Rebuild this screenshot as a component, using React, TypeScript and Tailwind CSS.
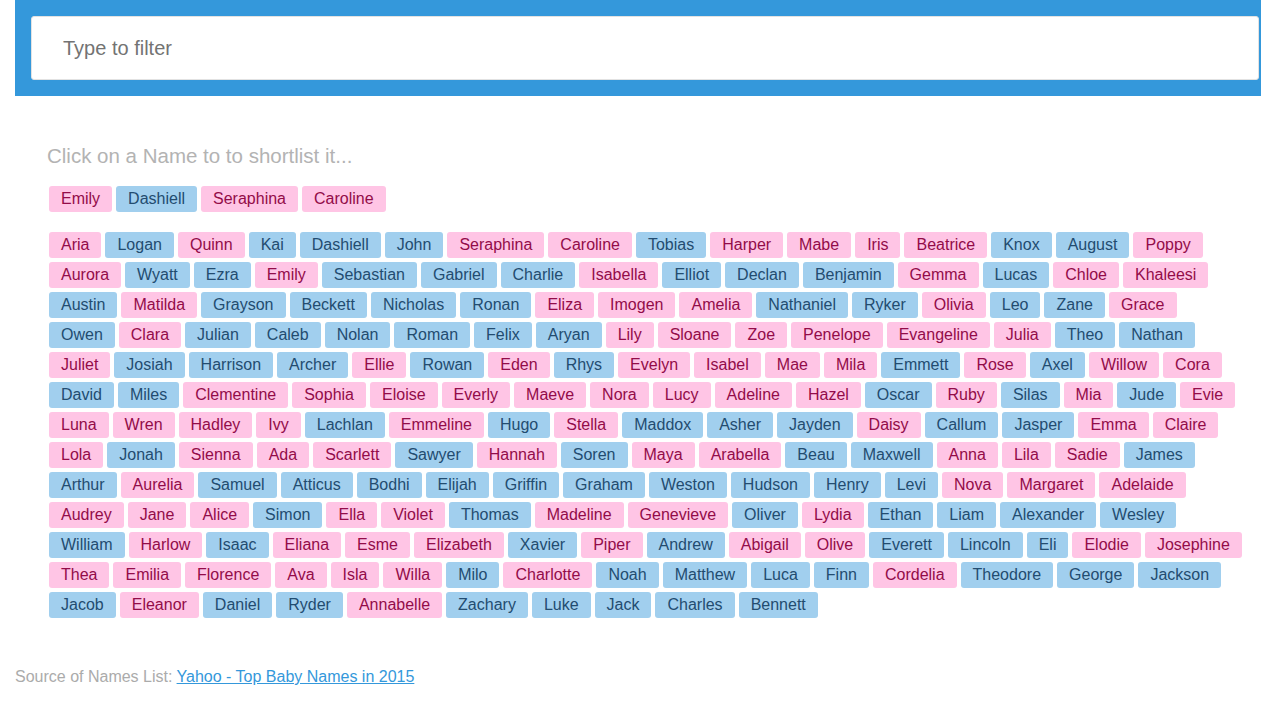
import { useState } from 'react';

// '*' marks a girl's name
const rows = [
  'Aria* Logan Quinn* Kai Dashiell John Seraphina* Caroline* Tobias Harper* Mabe* Iris* Beatrice* Knox August Poppy*',
  'Aurora* Wyatt Ezra Emily* Sebastian Gabriel Charlie Isabella* Elliot Declan Benjamin Gemma* Lucas Chloe* Khaleesi*',
  'Austin Matilda* Grayson Beckett Nicholas Ronan Eliza* Imogen* Amelia* Nathaniel Ryker Olivia* Leo Zane Grace*',
  'Owen Clara* Julian Caleb Nolan Roman Felix Aryan Lily* Sloane* Zoe* Penelope* Evangeline* Julia* Theo Nathan',
  'Juliet* Josiah Harrison Archer Ellie* Rowan Eden* Rhys Evelyn* Isabel* Mae* Mila* Emmett Rose* Axel Willow* Cora*',
  'David Miles Clementine* Sophia* Eloise* Everly* Maeve* Nora* Lucy* Adeline* Hazel* Oscar Ruby* Silas Mia* Jude Evie*',
  'Luna* Wren* Hadley* Ivy* Lachlan Emmeline* Hugo Stella* Maddox Asher Jayden Daisy* Callum Jasper Emma* Claire*',
  'Lola* Jonah Sienna* Ada* Scarlett* Sawyer Hannah* Soren Maya* Arabella* Beau Maxwell Anna* Lila* Sadie* James',
  'Arthur Aurelia* Samuel Atticus Bodhi Elijah Griffin Graham Weston Hudson Henry Levi Nova* Margaret* Adelaide*',
  'Audrey* Jane* Alice* Simon Ella* Violet* Thomas Madeline* Genevieve* Oliver Lydia* Ethan Liam Alexander Wesley',
  'William Harlow* Isaac Eliana* Esme* Elizabeth* Xavier Piper* Andrew Abigail* Olive* Everett Lincoln Eli Elodie* Josephine*',
  'Thea* Emilia* Florence* Ava* Isla* Willa* Milo Charlotte* Noah Matthew Luca Finn Cordelia* Theodore George Jackson',
  'Jacob Eleanor* Daniel Ryder Annabelle* Zachary Luke Jack Charles Bennett',
].map((r) => r.split(' ').map((n) => ({ name: n.replace('*', ''), girl: n.endsWith('*') })));

const shortlist = [
  { name: 'Emily', girl: true },
  { name: 'Dashiell', girl: false },
  { name: 'Seraphina', girl: true },
  { name: 'Caroline', girl: true },
];

function Chip({ name, girl }: { name: string; girl: boolean }) {
  return (
    <span
      className={
        girl
          ? 'px-3 py-1 leading-[18px] rounded-[3px] cursor-pointer bg-[#ffc5e5] text-[#930c49]'
          : 'px-3 py-1 leading-[18px] rounded-[3px] cursor-pointer bg-[#a1cfee] text-[#234c70]'
      }
    >
      {name}
    </span>
  );
}

export default function App() {
  const [filter, setFilter] = useState('');

  return (
    <div className="min-h-screen bg-white font-['Liberation_Sans',Arial,sans-serif]">
      <div className="ml-[15px] bg-[#3498db] pl-4 pr-[2px] py-4">
        <input
          value={filter}
          onChange={(e) => setFilter(e.target.value)}
          placeholder="Type to filter"
          className="block w-full h-16 bg-white border border-[#e2e2e2] rounded-[3px] pl-[31px] text-[20px] text-[#555] placeholder:text-[#737373] outline-none"
        />
      </div>

      <div className="pl-[47px] pt-[48px]">
        <p className="text-[20.5px] leading-6 text-[#b3b3b3]">Click on a Name to to shortlist it...</p>

        <div className="flex gap-1 mt-[18px] ml-[2px] text-[16px]">
          {shortlist.map((n) => (
            <Chip key={n.name} {...n} />
          ))}
        </div>

        <div className="flex flex-col gap-1 mt-5 ml-[2px] text-[16px]">
          {rows.map((row, i) => (
            <div key={i} className="flex gap-1">
              {row.map((n) => (
                <Chip key={n.name} {...n} />
              ))}
            </div>
          ))}
        </div>
      </div>

      <p className="mt-[47px] pl-[15px] text-[16px] leading-6 text-[#ababab]">
        Source of Names List:{' '}
        <a href="#" className="text-[#3498db] underline">
          Yahoo - Top Baby Names in 2015
        </a>
      </p>
    </div>
  );
}
